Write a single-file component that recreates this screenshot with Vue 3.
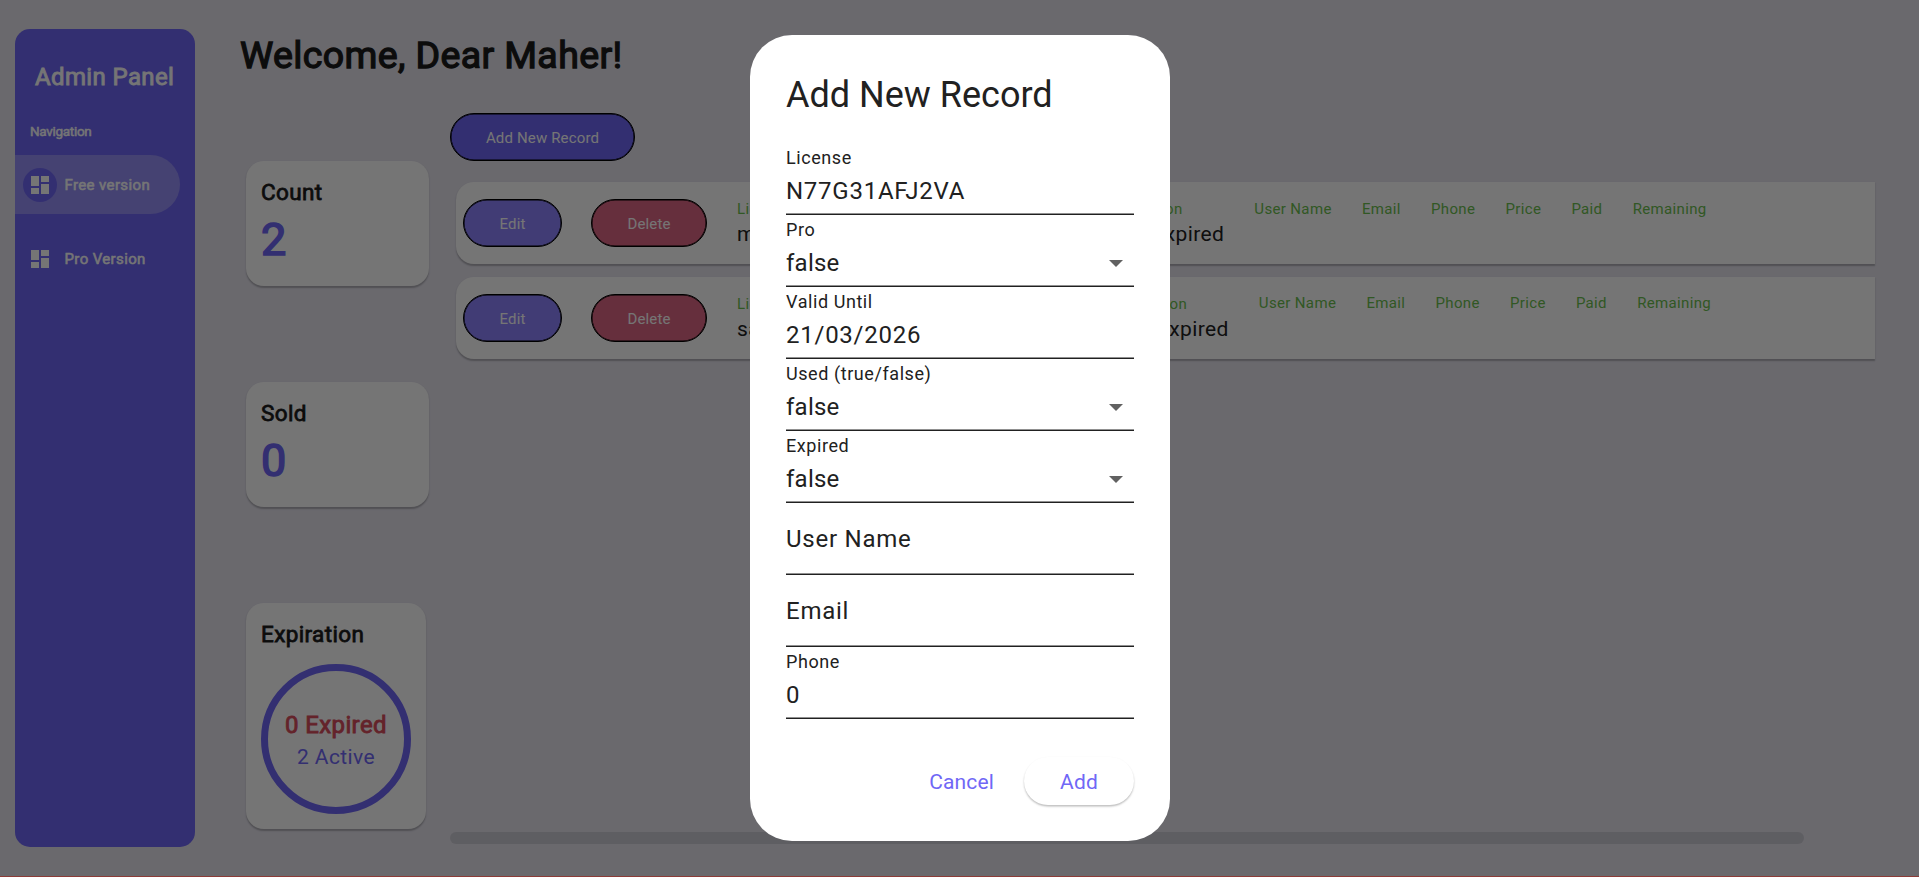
<script setup>
const nav = [
  { label: 'Free version', active: true },
  { label: 'Pro Version', active: false }
]
const stats = [
  { label: 'Count', value: 2 },
  { label: 'Sold', value: 0 }
]
const emptyColumns = ['User Name', 'Email', 'Phone', 'Price', 'Paid', 'Remaining']
const records = [
  { license: 'm', status: 'Not expired' },
  { license: 'sa', status: 'Not expired' }
]
const fields = [
  { label: 'License', value: 'N77G31AFJ2VA' },
  { label: 'Pro', value: 'false', select: true },
  { label: 'Valid Until', value: '21/03/2026' },
  { label: 'Used (true/false)', value: 'false', select: true },
  { label: 'Expired', value: 'false', select: true },
  { label: 'User Name' },
  { label: 'Email' },
  { label: 'Phone', value: '0' }
]
</script>

<template>
  <div class="page">
    <aside class="sidebar">
      <h2 class="brand heavy">Admin Panel</h2>
      <div class="section heavy">Navigation</div>
      <nav class="nav">
        <a v-for="n in nav" :key="n.label" class="nav-item" :class="{ active: n.active }">
          <span class="nav-icon">
            <svg width="24" height="24" viewBox="0 0 24 24"><path fill="#fff" d="M3 13h8V3H3v10zm0 8h8v-6H3v6zm10 0h8V11h-8v10zm0-18v6h8V3h-8z" /></svg>
          </span>
          <span class="nav-label heavy">{{ n.label }}</span>
        </a>
      </nav>
    </aside>

    <main class="main">
      <h1 class="welcome heavy">Welcome, Dear Maher!</h1>
      <div class="content">
        <div class="stats">
          <section v-for="s in stats" :key="s.label" class="card stat">
            <div class="card-title heavy">{{ s.label }}</div>
            <div class="stat-value heavy">{{ s.value }}</div>
          </section>
          <section class="card expiration">
            <div class="card-title heavy">Expiration</div>
            <div class="ring">
              <div class="expired heavy">0 Expired</div>
              <div class="alive">2 Active</div>
            </div>
          </section>
        </div>
        <div class="records">
          <button class="btn add-record">Add New Record</button>
          <div v-for="(r, i) in records" :key="i" class="record" :class="'record-' + i">
            <button class="btn edit">Edit</button>
            <button class="btn delete">Delete</button>
            <div class="col license"><span class="key">License</span><span class="val">{{ r.license }}</span></div>
            <div class="col status"><span class="key">Expiration</span><span class="val">{{ r.status }}</span></div>
            <div v-for="c in emptyColumns" :key="c" class="col empty"><span class="key">{{ c }}</span></div>
          </div>
          <div class="scrollbar"></div>
        </div>
      </div>
    </main>
    <div class="overlay">
      <div class="dialog">
        <h2 class="title">Add New Record</h2>
        <div v-for="f in fields" :key="f.label" class="field" :class="{ blank: !f.value }">
          <label class="label">{{ f.label }}</label>
          <div v-if="f.value" class="value" :class="{ choice: f.select }">
            <span>{{ f.value }}</span>
            <svg v-if="f.select" class="arrow" width="14" height="7" viewBox="0 0 14 7"><path d="M0 0h14L7 7z" fill="#616161" /></svg>
          </div>
        </div>
        <div class="actions">
          <button class="cancel">Cancel</button>
          <button class="add">Add</button>
        </div>
      </div>
    </div>
    <div class="edge"></div>
  </div>
</template>

<style>
body { margin: 0; overflow: hidden; }
</style>

<style scoped>
.page {
  position: relative;
  box-sizing: border-box;
  width: 1919px;
  height: 877px;
  padding: 29px 0 0 15px;
  display: flex;
  background: #e6e4ee;
  font-family: Roboto, "Liberation Sans", sans-serif;
  color: #212121;
  overflow: hidden;
}
.page * { box-sizing: border-box; }
h1, h2 { margin: 0; font-weight: 400; }
button { border: 0; padding: 0; background: none; font-family: inherit; }
.heavy { -webkit-text-stroke: 0.035em currentColor; }

.sidebar {
  width: 180px;
  height: 818px;
  flex: none;
  border-radius: 15px;
  background: #7067f6;
  color: #fff;
}
.brand { margin-top: 33px; padding-left: 20px; line-height: 30px; font-size: 24px; letter-spacing: 0.37px; white-space: nowrap; }
.section { margin-top: 30px; padding-left: 15px; line-height: 18px; font-size: 13.5px; letter-spacing: -0.3px; }
.nav { margin-top: 15px; display: flex; flex-direction: column; gap: 15px; }
.nav-item { width: 165px; height: 59px; display: flex; align-items: center; padding-left: 8px; }
.active { background: rgba(255, 255, 255, 0.27); border-radius: 0 30px 30px 0; }
.nav-icon { width: 34px; height: 34px; border-radius: 50%; display: flex; align-items: center; justify-content: center; }
.active .nav-icon { background: #7067f6; }
.nav-label { margin-left: 7.5px; font-size: 15px; line-height: 20px; letter-spacing: 0.37px; }

.main { padding-left: 45px; }
.welcome { height: 48px; line-height: 52px; font-size: 37.5px; letter-spacing: 0.37px; color: #1c1c1c; white-space: nowrap; }
.content { display: flex; margin-top: 36px; }
.stats { margin: 48px 0 0 6px; width: 183px; display: flex; flex-direction: column; gap: 96px; flex: none; }
.card { background: #fff; border-radius: 18px; padding: 15px; box-shadow: 0 1.5px 1.5px rgba(0, 0, 0, 0.24); }
.stat { height: 125px; }
.card-title { line-height: 32px; font-size: 22.5px; letter-spacing: 0.37px; color: #1c1c1c; }
.stat-value { padding-top: 2px; line-height: 60px; font-size: 45px; color: #7067f6; }
.expiration { width: 180px; height: 226px; }
.ring {
  width: 150px; height: 150px; margin-top: 14px; padding-top: 2px; border: 7.5px solid #7067f6; border-radius: 50%;
  display: flex; flex-direction: column; align-items: center; justify-content: center;
}
.expired { font-size: 24px; line-height: 34px; color: #d94c5d; letter-spacing: 0.37px; white-space: nowrap; }
.alive { font-size: 21px; line-height: 30px; color: #7067f6; letter-spacing: 0.37px; }

.records { margin-left: 21px; width: 1425px; }
.btn {
  display: block; height: 48px; padding-top: 1px; border: 1px solid #000; box-shadow: inset 0 0 0 0.5px #000;
  border-radius: 24px; color: #fff; font-size: 15px; letter-spacing: 0.15px; font-weight: 400;
}
.add-record { width: 185px; background: #7067f6; }
.record {
  height: 82px; margin: 21px 0 0 6px; padding-left: 7px; display: flex; align-items: center;
  background: #fff; border-radius: 18px 0 0 18px; box-shadow: 0 1.5px 1.5px rgba(0, 0, 0, 0.24);
}
.record-1 { margin-top: 13px; }
.edit { width: 99px; background: #8f84ff; flex: none; }
.delete { width: 116px; margin: 0 30px 0 29px; background: #df6886; flex: none; }
.col { align-self: flex-start; padding-top: 17px; display: flex; flex-direction: column; margin-right: 30.2px; white-space: nowrap; flex: none; }
.license { width: 345.5px; }
.record-1 .license { width: 350px; }
.record-1 .empty .key { margin-top: -1px; }
.key { font-size: 15px; line-height: 20px; color: #6cc04f; letter-spacing: 0.35px; }
.val { font-size: 21px; line-height: 30px; letter-spacing: 0.37px; }
.scrollbar { margin-top: 473px; width: 1354px; height: 12px; border-radius: 6px; background: rgba(0, 0, 0, 0.1); }

.overlay { position: absolute; inset: 0; background: rgba(0, 0, 0, 0.54); padding: 35px 0 0 750px; }
.dialog { width: 420px; height: 806px; padding: 36px; border-radius: 42px; background: #fff; }
.title { font-size: 36px; line-height: 48px; margin-bottom: 24px; }
.field { height: 72px; padding-top: 3px; border-bottom: 1px solid #212121; box-shadow: inset 0 -1px rgba(33, 33, 33, 0.5); }
.label { display: block; font-size: 18px; line-height: 24px; letter-spacing: 0.57px; }
.value { margin-top: 6px; font-size: 24px; line-height: 30px; letter-spacing: 0.75px; display: flex; justify-content: space-between; align-items: center; padding-right: 11px; }
.choice { letter-spacing: 0.25px; }
.blank { padding-top: 0; }
.blank .label { font-size: 24px; line-height: 72px; letter-spacing: 0.75px; }
.actions { margin-top: 38px; display: flex; justify-content: flex-end; align-items: center; gap: 30px; }
.cancel, .add { height: 48px; padding-top: 2px; font-size: 21px; color: #7067f6; letter-spacing: 0.15px; }
.add { width: 110px; border-radius: 24px; box-shadow: 0 1.5px 2px rgba(0, 0, 0, 0.26); }
.edge { position: absolute; left: 0; right: 0; bottom: 0; height: 1px; background: #8c3c38; }
</style>
